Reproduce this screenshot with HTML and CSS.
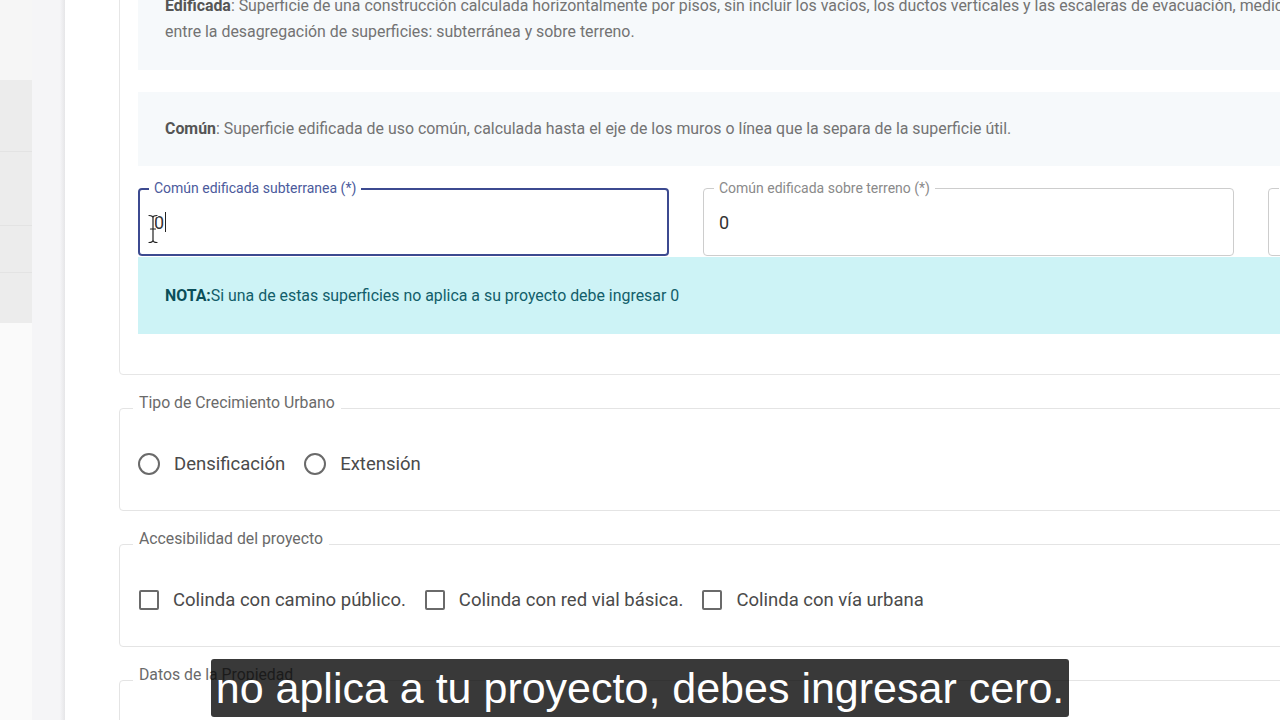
FILE: index.html
```html
<!DOCTYPE html>
<html lang="es">
<head>
<meta charset="utf-8">
<title>Formulario</title>
<link rel="stylesheet" href="styles.css">
</head>
<body>
<div class="app">
  <aside class="sidebar">
    <div class="side-top"></div>
    <div class="side-menu">
      <div class="side-item h71"></div>
      <div class="side-item h74"></div>
      <div class="side-item h47"></div>
      <div class="side-item h50"></div>
    </div>
  </aside>
  <div class="gutter"></div>
  <main class="main">
    <div class="main-inner">
      <section class="card">
        <div class="info info-first">
          <p><b>Edificada</b>: Superficie de una construcción calculada horizontalmente por pisos, sin incluir los vacíos, los ductos verticales y las escaleras de evacuación, medida hasta la cara exterior de los muros perimetrales, distinguiendo<br>entre la desagregación de superficies: subterránea y sobre terreno.</p>
        </div>
        <div class="info">
          <p><b>Común</b>: Superficie edificada de uso común, calculada hasta el eje de los muros o línea que la separa de la superficie útil.</p>
        </div>
        <div class="fields">
          <div class="field focused">
            <span class="field-label">Común edificada subterranea (*)</span>
            <span class="value">0</span><span class="caret"></span>
          </div>
          <div class="field">
            <span class="field-label">Común edificada sobre terreno (*)</span>
            <span class="value">0</span>
          </div>
          <div class="field">
            <span class="field-label">Común edificada total (*)</span>
            <span class="value">0</span>
          </div>
        </div>
        <div class="nota"><b>NOTA:</b>Si una de estas superficies no aplica a su proyecto debe ingresar 0</div>
      </section>

      <fieldset class="group group-first">
        <legend>Tipo de Crecimiento Urbano</legend>
        <div class="options">
          <label class="opt"><span class="radio"></span>Densificación</label>
          <label class="opt"><span class="radio"></span>Extensión</label>
        </div>
      </fieldset>

      <fieldset class="group">
        <legend>Accesibilidad del proyecto</legend>
        <div class="options checks">
          <label class="opt"><span class="check"></span>Colinda con camino público.</label>
          <label class="opt"><span class="check"></span>Colinda con red vial básica.</label>
          <label class="opt"><span class="check"></span>Colinda con vía urbana</label>
        </div>
      </fieldset>

      <fieldset class="group">
        <legend>Datos de la Propiedad</legend>
        <div class="options"></div>
      </fieldset>
    </div>
  </main>
</div>

<svg class="ibeam" width="12" height="30" viewBox="0 0 12 30" aria-hidden="true">
  <path d="M2 1.5 Q6 1.5 6 4 Q6 1.5 10 1.5 M6 4 V26 M2 28.5 Q6 28.5 6 26 Q6 28.5 10 28.5 M3.5 15 H8.5" fill="none" stroke="#ffffff" stroke-width="3" stroke-linecap="round"/>
  <path d="M2 1.5 Q6 1.5 6 4 Q6 1.5 10 1.5 M6 4 V26 M2 28.5 Q6 28.5 6 26 Q6 28.5 10 28.5 M3.5 15 H8.5" fill="none" stroke="#222222" stroke-width="1.2" stroke-linecap="round"/>
</svg>

<div class="subtitle">no aplica a tu proyecto, debes ingresar cero.</div>
</body>
</html>
```

FILE: styles.css
```css
* { box-sizing: border-box; }

html, body {
  margin: 0;
  padding: 0;
  width: 1280px;
  height: 720px;
  overflow: hidden;
  background: #ffffff;
  font-family: Roboto, "Liberation Sans", Arial, sans-serif;
}

.app {
  display: flex;
  width: 1280px;
  height: 720px;
}

.sidebar {
  width: 32px;
  flex: 0 0 32px;
  background: #fafafa;
  display: flex;
  flex-direction: column;
}

.side-top {
  height: 80px;
  background: #f6f6f6;
}

.side-menu {
  display: flex;
  flex-direction: column;
  background: #ececec;
}

.side-item {
  border-bottom: 1px solid #e3e3e3;
}
.side-item:last-child { border-bottom: none; }
.h71 { height: 72px; }
.h74 { height: 74px; }
.h47 { height: 47px; }
.h50 { height: 50px; }

.gutter {
  width: 33px;
  flex: 0 0 33px;
  background: linear-gradient(to right, #f5f5f7 0, #f5f5f7 28px, #ececee 31px, #e6e6e8 33px);
}

.main {
  flex: 1 1 auto;
  overflow: hidden;
  background: #ffffff;
}

.main-inner {
  width: 1800px;
  padding-left: 54px;
}

.card {
  margin-top: -52px;
  border: 1px solid #e6e6e6;
  border-radius: 4px;
  padding: 20px 18px 40px 18px;
}

.info {
  background: #f6f9fb;
  padding: 24px 27px;
  margin-bottom: 22px;
}

.info-first { padding-bottom: 25px; }

.info p {
  margin: 0;
  font-size: 15.9px;
  line-height: 26px;
  color: #737373;
  white-space: nowrap;
}

.info b {
  color: #555555;
  font-weight: 700;
}

.fields {
  display: grid;
  grid-template-columns: 530px 531px 531px;
  column-gap: 34px;
  padding-left: 1px;
}

.field {
  position: relative;
  height: 68px;
  border: 1px solid #cdcdcd;
  border-radius: 4px;
  display: flex;
  align-items: center;
  padding-left: 15px;
}

.field-label {
  position: absolute;
  top: -9px;
  left: 10px;
  padding: 0 5px;
  background: #ffffff;
  font-size: 14px;
  line-height: 16px;
  color: #8a8a8a;
  white-space: nowrap;
}

.value {
  font-size: 18px;
  color: #333333;
}

.field.focused {
  border: 2px solid #3c4a90;
  padding-left: 14px;
  margin-left: -1px;
}

.field.focused .field-label {
  top: -10px;
  left: 9px;
  color: #4b5a9c;
}

.caret {
  display: inline-block;
  width: 1px;
  height: 20px;
  background: #222222;
  margin-left: 1px;
}

.nota {
  margin-top: 1px;
  background: #cdf3f6;
  padding: 27px 27px 26px;
  font-size: 15.9px;
  line-height: 24px;
  color: #125e6a;
}

.nota b { color: #0b4e59; font-weight: 700; }

.group {
  margin: 18px 0 0 0;
  border: 1px solid #e4e4e4;
  border-radius: 4px;
  padding: 29px 13px 34px 13px;
  min-width: 0;
}

.group-first { margin-top: 18px; }

.group legend {
  padding: 0 6px 10px 6px;
  font-size: 15.8px;
  line-height: 20px;
  color: #6a6a6a;
}

.options {
  display: flex;
  align-items: center;
  gap: 20px;
  height: 24px;
  padding-left: 6px;
}

.options.checks { gap: 19px; }

.opt {
  display: flex;
  align-items: center;
  gap: 14px;
  font-size: 18.5px;
  color: #4a4a4a;
  white-space: nowrap;
}

.radio {
  width: 22px;
  height: 22px;
  border: 2px solid #6a6a6a;
  border-radius: 50%;
  flex: 0 0 22px;
  margin-left: -1px;
}

.check {
  width: 20px;
  height: 20px;
  border: 2px solid #6a6a6a;
  border-radius: 2px;
  flex: 0 0 20px;
}

.ibeam {
  position: absolute;
  left: 147px;
  top: 214px;
}

.subtitle {
  position: absolute;
  left: 211px;
  top: 659px;
  width: 858px;
  height: 58px;
  border-radius: 3px;
  background: rgba(8, 8, 8, 0.8);
  color: #ffffff;
  font-family: "Liberation Sans", Arial, sans-serif;
  font-size: 43px;
  line-height: 58px;
  text-align: center;
  white-space: nowrap;
  overflow: hidden;
}
```
